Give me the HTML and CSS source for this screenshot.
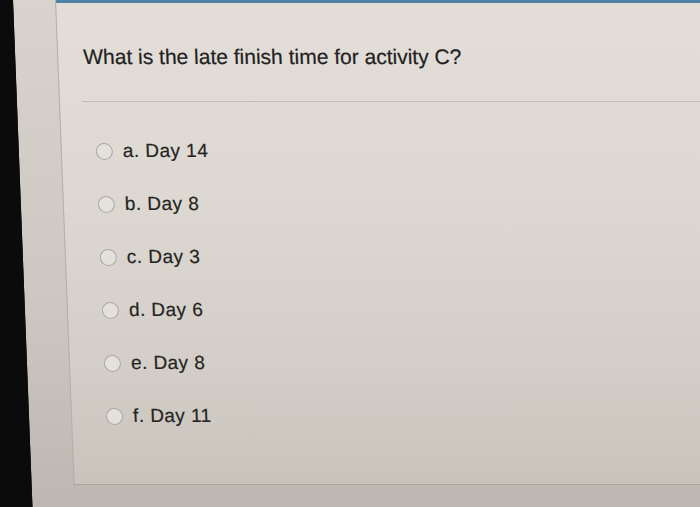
FILE: index.html
```html
<!DOCTYPE html>
<html>
<head>
<meta charset="utf-8">
<link rel="stylesheet" href="styles.css">
</head>
<body>
<div class="screen">
  <div class="page">
    <div class="card">
      <div class="topbar"></div>
      <div class="question">What is the late finish time for activity C?</div>
      <div class="rule"></div>
      <div class="answers">
        <label class="opt"><span class="radio"></span><span>a. Day 14</span></label>
        <label class="opt"><span class="radio"></span><span>b. Day 8</span></label>
        <label class="opt"><span class="radio"></span><span>c. Day 3</span></label>
        <label class="opt"><span class="radio"></span><span>d. Day 6</span></label>
        <label class="opt"><span class="radio"></span><span>e. Day 8</span></label>
        <label class="opt"><span class="radio"></span><span>f. Day 11</span></label>
      </div>
    </div>
  </div>
</div>
</body>
</html>
```
FILE: styles.css
```css
html, body {
  margin: 0;
  padding: 0;
  width: 700px;
  height: 507px;
  overflow: hidden;
  background: #0b0b0c;
}
.screen {
  width: 687px;
  height: 507px;
  margin-left: 13px;
  overflow: hidden;
  transform: skewX(2.2deg);
  transform-origin: 0 0;
  font-family: "Liberation Sans", Arial, sans-serif;
  color: #232220;
}
.page {
  height: 100%;
  padding-left: 42px;
  background: linear-gradient(180deg, #d8d4cd 0%, #ccc8c1 60%, #bcb8b1 100%);
}
.card {
  height: 485px;
  box-sizing: border-box;
  border-left: 1px solid #b3afa8;
  border-bottom: 1px solid #a8a49d;
  background: linear-gradient(180deg, #e3dfd8 0%, #ddd9d2 40%, #d3cfc8 75%, #c8c4bc 100%);
  display: flex;
  flex-direction: column;
}
.topbar {
  height: 3px;
  background: #4c83a4;
}
.question {
  margin: 42px 0 0 25px;
  font-size: 21px;
  line-height: 24px;
  color: #22211f;
  -webkit-text-stroke: 0.2px #22211f;
}
.rule {
  margin: 32px 0 0 22px;
  height: 1px;
  background: #c2beb7;
}
.answers {
  display: flex;
  flex-direction: column;
  gap: 31px;
  margin: 38px 0 0 34px;
}
.opt {
  display: flex;
  align-items: center;
  gap: 10px;
  font-size: 19px;
  letter-spacing: 0.45px;
  line-height: 22px;
  color: #252422;
  -webkit-text-stroke: 0.2px #252422;
}
.radio {
  width: 17px;
  height: 17px;
  flex: none;
  box-sizing: border-box;
  border: 1.5px solid #aaa7a2;
  border-radius: 50%;
  background: #e4e1dc;
}
```
